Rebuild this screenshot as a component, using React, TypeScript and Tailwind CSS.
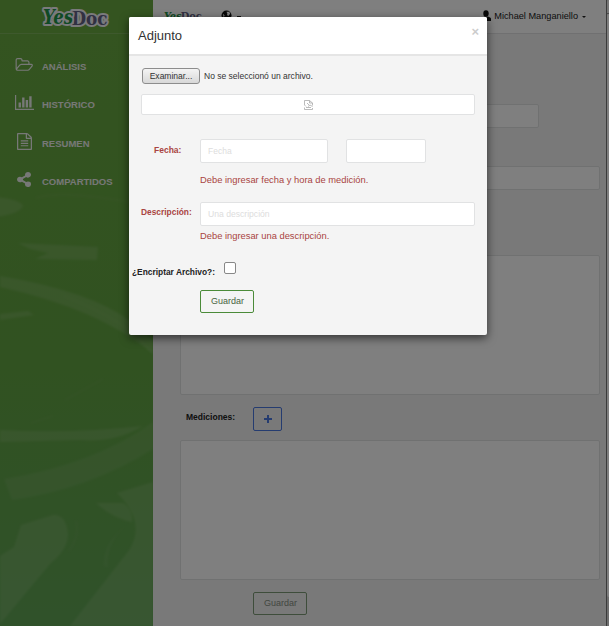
import React from 'react';

const icons = {
  folder: {
    box: '0 128 1984 1536',
    d: 'M1845 931q0-35-53-35h-1088q-40 0-85.500 21.500t-71.500 52.500l-294 363q-18 24-18 40 0 35 53 35h1088q40 0 86-22t71-53l294-363q18-22 18-39zm-1141-163h768v-160q0-40-28-68t-68-28h-576q-40 0-68-28t-28-68v-64q0-40-28-68t-68-28h-320q-40 0-68 28t-28 68v853l256-315q44-53 116-87.500t140-34.500zm1269 163q0 62-46 120l-295 363q-43 53-116 87.500t-140 34.500h-1088q-92 0-158-66t-66-158v-960q0-92 66-158t158-66h320q92 0 158 66t66 158v32h544q92 0 158 66t66 158v160h192q54 0 99 24.500t67 70.500q15 32 15 68z',
  },
  chart: {
    box: '0 128 2048 1536',
    d: 'M640 896v512h-256v-512h256zm384-512v1024h-256v-1024h256zm1024 1152v128h-2048v-1536h128v1408h1920zm-640-896v768h-256v-768h256zm384-384v1152h-256v-1152h256z',
  },
  file: {
    box: '128 0 1536 1792',
    d: 'M1596 380q28 28 48 76t20 88v1152q0 40-28 68t-68 28h-1344q-40 0-68-28t-28-68v-1600q0-40 28-68t68-28h896q40 0 88 20t76 48zm-444-244v376h376q-10-29-22-41l-313-313q-12-12-41-22zm384 1528v-1024h-416q-40 0-68-28t-28-68v-416h-768v1536h1280zm-1024-864q0-14 9-23t23-9h704q14 0 23 9t9 23v64q0 14-9 23t-23 9h-704q-14 0-23-9t-9-23v-64zm736 224q14 0 23 9t9 23v64q0 14-9 23t-23 9h-704q-14 0-23-9t-9-23v-64q0-14 9-23t23-9h704zm0 256q14 0 23 9t9 23v64q0 14-9 23t-23 9h-704q-14 0-23-9t-9-23v-64q0-14 9-23t23-9h704z',
  },
  share: {
    box: '0 0 448 512',
    d: 'M352 320c-22.600 0-43.400 7.800-59.800 20.900l-102.500-64.100a96.600 96.600 0 0 0 0-41.600l102.500-64.100C308.600 184.200 329.400 192 352 192c53 0 96-43 96-96S405 0 352 0s-96 43-96 96c0 7.200.8 14.100 2.300 20.800l-102.500 64.100C139.400 167.800 118.600 160 96 160c-53 0-96 43-96 96s43 96 96 96c22.600 0 43.400-7.800 59.800-20.900l102.500 64.100A96 96 0 1 0 352 320z',
  },
};

const menu: { label: string; icon: keyof typeof icons; size: string }[] = [
  { label: 'ANÁLISIS', icon: 'folder', size: 'h-[14px] w-[18px] -mt-[5px] mr-px' },
  { label: 'HISTÓRICO', icon: 'chart', size: 'h-[15px] w-[19px] -mt-[5px]' },
  { label: 'RESUMEN', icon: 'file', size: 'h-[17px] w-[15px] -mt-[5px]' },
  { label: 'COMPARTIDOS', icon: 'share', size: 'h-[15px] w-[14px] -mt-[5px] mr-px' },
];

function Logo({ className, outline }: { className: string; outline: number }) {
  return (
    <svg viewBox="0 0 68 22" className={className}>
      <g
        fontFamily="'DejaVu Serif Condensed','DejaVu Serif',serif"
        fontWeight="bold"
        stroke="#f4f4f8"
        strokeWidth={outline}
        strokeLinejoin="round"
        paintOrder="stroke"
      >
        <text x="30" y="17.500" fill="#626284" textLength="36" lengthAdjust="spacingAndGlyphs" fontSize="18">Doc</text>
        <text x="1.500" y="16.500" fill="#1f9448" textLength="30" lengthAdjust="spacingAndGlyphs" fontSize="20" fontStyle="italic">Yes</text>
      </g>
    </svg>
  );
}

function Texture() {
  return (
    <svg viewBox="0 0 153 592" preserveAspectRatio="none" className="absolute top-[34px] left-0 h-[592px] w-[153px]">
      <defs>
        <linearGradient id="leaf" x1="0" y1="0" x2="0" y2="1">
          <stop offset="0" stopColor="#68a840" />
          <stop offset=".55" stopColor="#62a442" />
          <stop offset="1" stopColor="#60a455" />
        </linearGradient>
        <filter id="soft"><feGaussianBlur stdDeviation="0.8" /></filter>
      </defs>
      <rect width="153" height="592" fill="url(#leaf)" />
      <g fill="#a9c997" fillOpacity=".23" filter="url(#soft)">
        <path d="M-5 163Q20 165 23 172Q20 180-5 183Z" />
        <path d="M18 209L98 213L97 226L35 225L48 219L30 215Z" />
        <path d="M0 242Q90 257 130 287L153 306V320Q100 275 0 253Z" />
        <path d="M0 280L28 277L34 281L0 286Z" />
        <path d="M0 396Q70 400 143 392Q115 409 80 406L0 408Z" />
        <path d="M4 445Q95 430 153 388V415Q90 455 12 466Z" opacity=".65" />
        <path d="M21 491L53 481Q66 480 68 500Q68 515 50 530L0 590V522L14 513Z" />
        <path d="M96 469H123Q133 475 132 488Q112 484 96 469Z" />
        <path d="M117 459L153 448V592H70L130 515Q146 487 117 459Z" />
        <path d="M130 488Q105 507 108 533L104 532Q102 509 130 488Z" opacity=".5" />
      </g>
      <g fill="none" stroke="#99bd82" strokeOpacity=".2" filter="url(#soft)">
        <path d="M64 262Q130 288 152 319M36 164Q60 156 130 168M65 366L103 345M31 389L53 382M76 487Q80 502 69 517" />
      </g>
    </svg>
  );
}

function Field({ className = '', children }: { className?: string; children?: React.ReactNode }) {
  return <div className={`rounded-[2px] border border-[#e1e2e3] bg-white ${className}`}>{children}</div>;
}

function Sidebar() {
  return (
    <aside className="relative h-full w-[153px] shrink-0 bg-[#68a840]">
      <Texture />
      <div className="relative flex h-[34px] items-start border-b border-[#7db35b] pt-[7px] pl-[41px]">
        <Logo className="h-[22px] w-[69px]" outline={4} />
      </div>
      <nav className="relative pt-[14px]">
        {menu.map(({ label, icon, size }) => (
          <a key={label} className="flex h-[38.300px] items-center text-[9.500px] font-bold text-[#eef0ee]">
            <span className="ml-[15px] flex w-[19px] justify-center">
              <svg viewBox={icons[icon].box} preserveAspectRatio="none" fill="currentColor" className={size}>
                <path d={icons[icon].d} />
              </svg>
            </span>
            <span className="ml-2">{label}</span>
          </a>
        ))}
      </nav>
    </aside>
  );
}

function Page() {
  return (
    <main className="flex h-full w-[453px] flex-col bg-[#f2f2f3]">
      <header className="flex h-[34px] shrink-0 items-start border-b border-[#e0e1e3] bg-white pt-[10px] leading-[12px] text-[#202020]">
        <Logo className="ml-[10px] h-[13px] w-[40px]" outline={0} />
        <svg viewBox="0 0 12 12" className="ml-[18px] h-[11px] w-[11px]">
          <circle cx="6" cy="6" r="5.500" fill="#111" />
          <path d="M6 2L9 1.800L10 4L8 6.500L6.500 5.500L7 4ZM2 4L4 6L3 8Z" fill="#fff" />
        </svg>
        <span className="mt-[6px] ml-[5px] h-[2px] w-1 bg-[#222]" />
        <span className="ml-auto flex items-start">
          <svg viewBox="0 0 10 11" className="h-[11px] w-[10px]" fill="#111">
            <ellipse cx="5" cy="3.500" rx="2.700" ry="3.200" />
            <path d="M0 11V8.500Q1 7 4 6.500H6Q10 7 10 9V11Z" />
          </svg>
          <span className="ml-[3px] text-[9.200px]">Michael Manganiello</span>
          <span className="mt-[6px] mr-[20px] ml-[4px] h-0 w-0 border-x-2 border-t-2 border-x-transparent border-t-[#222]" />
        </span>
      </header>
      <section className="flex flex-col pr-[6px] pl-[27px]">
        <Field className="mt-[70px] h-[24px] w-[359px]" />
        <Field className="mt-[38px] h-[24px]" />
        <Field className="mt-[65px] h-[140px]" />
        <div className="mt-[12px] flex h-[24px]">
          <span className="w-[73px] pt-[5px] pl-[6px] text-[8.500px] leading-[11px] font-bold text-[#222]">Mediciones:</span>
          <button className="flex h-[24px] w-[29px] items-center justify-center rounded-[2px] border border-[#4b79e0]">
            <svg viewBox="0 0 8 8" className="h-2 w-2" fill="#4b79e0"><path d="M3 0H5V3H8V5H5V8H3V5H0V3H3Z" /></svg>
          </button>
        </div>
        <Field className="mt-[9px] h-[140px]" />
        <button className="mt-[12px] ml-[73px] h-[23px] w-[54px] rounded-[2px] border border-[#7d9b77] pl-px text-[9px] text-[#868e82]">Guardar</button>
      </section>
    </main>
  );
}

function Dialog() {
  return (
    <div className="absolute top-[17px] left-[129px] h-[318px] w-[358px] overflow-hidden rounded-[2px] bg-[#f4f4f4] shadow-[0_3px_10px_rgba(0,0,0,0.6)]">
      <div className="flex h-[39px] items-start justify-between border-b-2 border-[#e5e5e5] bg-white pt-[10px] pr-[8px] pl-[9px]">
        <h1 className="text-[13px] leading-[18px] text-[#333]">Adjunto</h1>
        <span className="text-[13px] leading-[9px] font-bold text-[#ccc]">×</span>
      </div>
      <form className="text-[9.360px] text-[#a94442]">
        <div className="mt-[12px] ml-[13px] flex h-[16px] items-center text-[8.530px] text-[#333]">
          <span className="flex h-[16px] w-[58px] items-center justify-center rounded-[3px] border border-[#8d8d8d] bg-linear-to-b from-[#f4f4f4] to-[#d8d8d8]">Examinar...</span>
          <span className="ml-[4px] whitespace-nowrap">No se seleccionó un archivo.</span>
        </div>
        <Field className="mt-[10px] ml-[12px] flex h-[21px] w-[334px] items-center justify-center">
          <svg viewBox="0 0 9 10" className="h-[10px] w-[9px]" fill="none" stroke="#aaa" strokeWidth=".8">
            <path d="M.5 5V.5H5.500L8.500 3V5.500M5.500.5V3H8.500M.5 5L2 6.500M3 3L5 5M4 6.500L6 5L8.500 6.500M.5 7.500V9.500H8.500V8M2 7.500H7" />
          </svg>
        </Field>
        <div className="mt-[24px] flex h-[24px] items-center">
          <b className="w-[71px] pb-[2px] pl-[25px] text-[8.500px]">Fecha:</b>
          <Field className="flex h-[24px] w-[128px] items-center pl-[7px] text-[8.500px] text-[#ddd]">Fecha</Field>
          <Field className="ml-[18px] h-[24px] w-[80px]" />
        </div>
        <p className="mt-[11px] ml-[71px] leading-[12px]">Debe ingresar fecha y hora de medición.</p>
        <div className="mt-[16px] flex h-[24px] items-center">
          <b className="w-[71px] pb-[4px] pl-[12px] text-[8.400px]">Descripción:</b>
          <Field className="flex h-[24px] w-[275px] items-center pl-[7px] text-[8.600px] text-[#ddd]">Una descripción</Field>
        </div>
        <p className="mt-[4px] ml-[71px] leading-[12px]">Debe ingresar una descripción.</p>
        <div className="mt-[20px] flex h-[17px] items-start">
          <b className="w-[95px] pt-[5px] pl-[3px] text-[8.400px] leading-[11px] text-[#222]">¿Encriptar Archivo?:</b>
          <span className="h-[12px] w-[12px] rounded-[2px] border border-[#888] bg-white" />
        </div>
        <button className="mt-[11px] ml-[71px] block h-[23px] w-[54px] rounded-[2px] border border-[#4b8b39] pl-px text-[9px] text-[#486340]">Guardar</button>
      </form>
    </div>
  );
}

export default function App() {
  return (
    <div className="relative flex h-[626px] w-[609px] overflow-hidden font-['Liberation_Sans',Arial,sans-serif]">
      <Sidebar />
      <Page />
      <div className="flex h-full w-[3px] flex-col border-l border-[#777] bg-[#ddd]">
        <div className="h-[14px] rounded-tl-[3px] border-b border-[#999] bg-[#eee]" />
        <div className="h-[583px] rounded-l-[2px] bg-white" />
      </div>
      <div className="absolute inset-0 bg-black/50" />
      <Dialog />
    </div>
  );
}
